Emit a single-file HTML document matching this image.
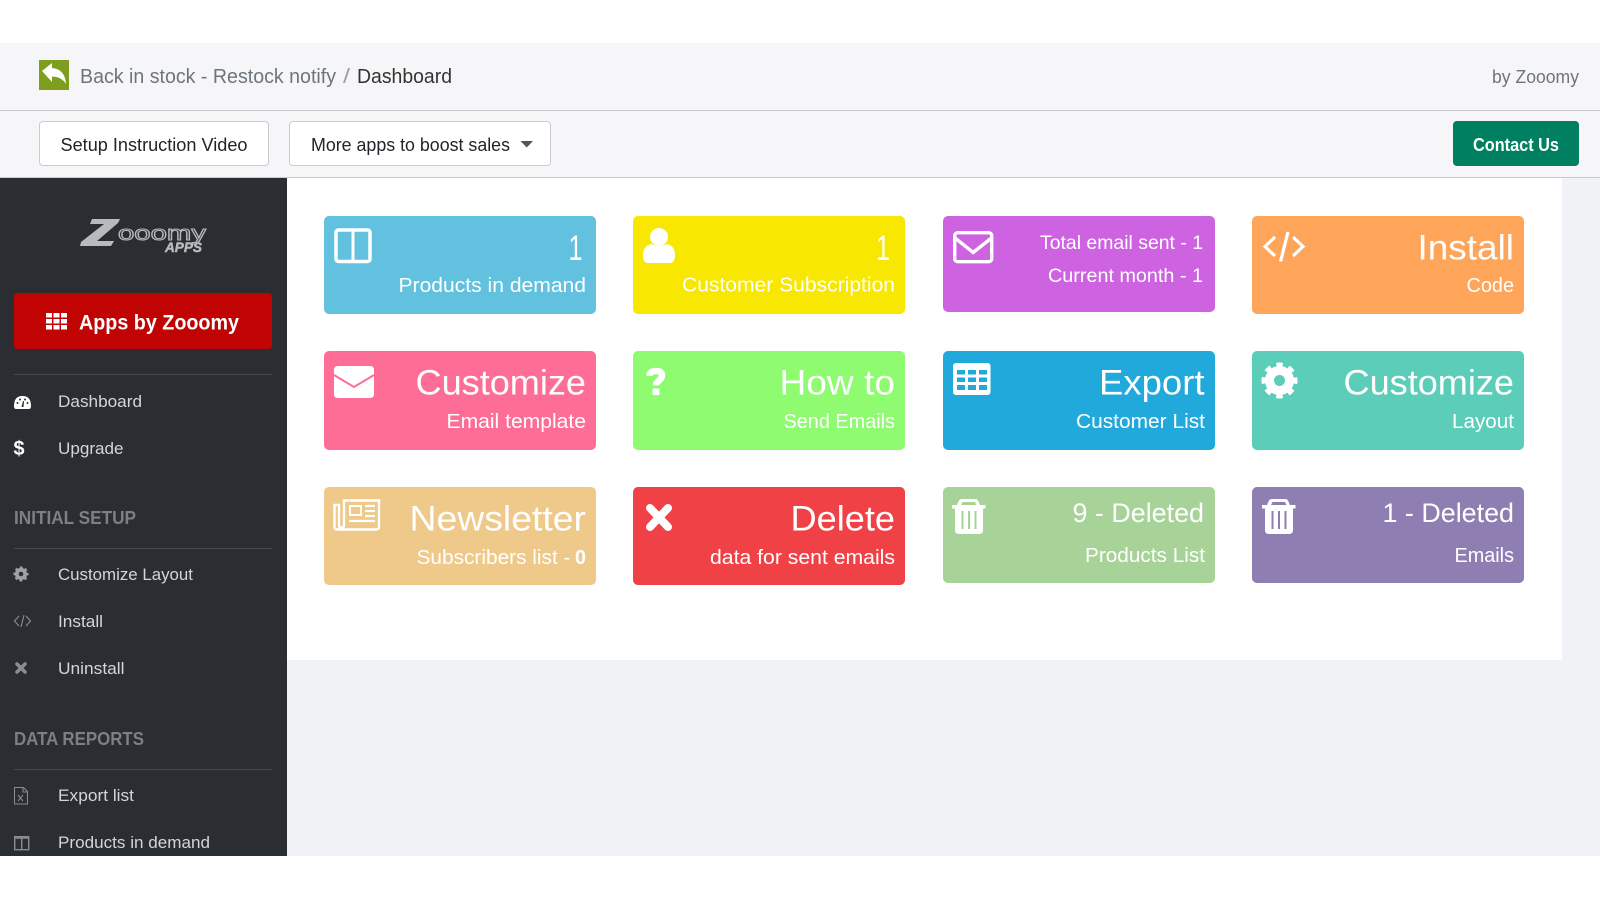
<!DOCTYPE html>
<html lang="en">
<head>
<meta charset="utf-8">
<title>Dashboard</title>
<style>
html,body{margin:0;padding:0;width:1600px;height:900px;overflow:hidden;background:#fff;font-family:"Liberation Sans",sans-serif}
.b{position:absolute;box-sizing:border-box}
.card{position:absolute;width:272px;border-radius:5px}
svg#o{position:absolute;left:0;top:0}
svg text{font-family:"Liberation Sans",sans-serif}
.w text{fill:#fff}
.nav{fill:#d3d5d8;font-size:17px}
.hd{fill:#7d7f87;font-size:18px;font-weight:700}
</style>
</head>
<body>
<div class="b" style="left:0;top:43px;width:1600px;height:135px;background:#f6f6f8"></div>
<div class="b" style="left:0;top:110px;width:1600px;height:1px;background:#c9cacc"></div>
<div class="b" style="left:0;top:177px;width:1600px;height:1px;background:#c9cacc"></div>
<div class="b" style="left:287px;top:178px;width:1313px;height:678px;background:#f1f2f6"></div>
<div class="b" style="left:287px;top:178px;width:1275px;height:482px;background:#fff"></div>
<div class="b" style="left:0;top:178px;width:287px;height:678px;background:#2a2e33"></div>
<div class="b" style="left:39px;top:121px;width:230px;height:45px;background:#fff;border:1px solid #c9cccf;border-radius:4px"></div>
<div class="b" style="left:289px;top:121px;width:262px;height:45px;background:#fff;border:1px solid #c9cccf;border-radius:4px"></div>
<div class="b" style="left:1453px;top:121px;width:126px;height:45px;background:#008060;border-radius:4px"></div>
<div class="b" style="left:14px;top:293px;width:258px;height:56px;background:#c00404;border-radius:3px"></div>
<div class="b" style="left:14px;top:374px;width:258px;height:1px;background:#45494e"></div>
<div class="b" style="left:14px;top:548px;width:258px;height:1px;background:#45494e"></div>
<div class="b" style="left:14px;top:769px;width:258px;height:1px;background:#45494e"></div>

<div class="card" style="left:324px;top:216px;height:98px;background:#62c1df"></div>
<div class="card" style="left:633px;top:216px;height:98px;background:#f8e700"></div>
<div class="card" style="left:943px;top:216px;height:96px;background:#ce63e2"></div>
<div class="card" style="left:1252px;top:216px;height:98px;background:#ffa55a"></div>
<div class="card" style="left:324px;top:351px;height:99px;background:#fd6d95"></div>
<div class="card" style="left:633px;top:351px;height:99px;background:#8efb70"></div>
<div class="card" style="left:943px;top:351px;height:99px;background:#22a9db"></div>
<div class="card" style="left:1252px;top:351px;height:99px;background:#5ccdb9"></div>
<div class="card" style="left:324px;top:487px;height:98px;background:#efc98a"></div>
<div class="card" style="left:633px;top:487px;height:98px;background:#ef4146"></div>
<div class="card" style="left:943px;top:487px;height:96px;background:#a7d398"></div>
<div class="card" style="left:1252px;top:487px;height:96px;background:#8f7eb2"></div>

<svg id="o" width="1600" height="900" viewBox="0 0 1600 900" xmlns="http://www.w3.org/2000/svg">
<defs>
<g id="cog"><circle r="10" fill="none" stroke="#fff" stroke-width="9"/><circle r="15.5" fill="none" stroke="#fff" stroke-width="5" stroke-dasharray="6.2 5.97" stroke-dashoffset="3.1"/></g>
<path id="trash" fill="#fff" fill-rule="evenodd" d="M0 6h5l2-4.500Q8 0 10 0h13q2 0 3 1.500L28 6h5.500v3.500H31V31q0 4-4 4H7q-4 0-4-4V9.500H0zM9 6h15.500l-1.500-3H10.500zM9.500 12v18h2V12zM16 12v18h2V12zM22.500 12v18h2V12z"/>
</defs>

<!-- header -->
<rect x="39" y="60" width="30" height="30" fill="#7d9e1e"/>
<path d="M42 71l10-8v5q13 1 14 16-4-7-14-7.500V82z" fill="#fff"/>
<text x="80" y="83" font-size="20" fill="#6c757d" textLength="256" lengthAdjust="spacingAndGlyphs">Back in stock - Restock notify</text>
<text x="343" y="83" font-size="20" fill="#9aa0a6" textLength="7" lengthAdjust="spacingAndGlyphs">/</text>
<text x="357" y="83" font-size="20" fill="#333" textLength="95" lengthAdjust="spacingAndGlyphs">Dashboard</text>
<text x="1492" y="83" font-size="18" fill="#6c757d" textLength="87" lengthAdjust="spacingAndGlyphs">by Zooomy</text>
<text x="60.500" y="151" font-size="18" fill="#212529" textLength="187" lengthAdjust="spacingAndGlyphs">Setup Instruction Video</text>
<text x="311" y="151" font-size="18" fill="#212529" textLength="199" lengthAdjust="spacingAndGlyphs">More apps to boost sales</text>
<path d="M520.500 141h12.500l-6.250 6.500z" fill="#555"/>
<text x="1473" y="151" font-size="18" font-weight="700" fill="#fff" textLength="86" lengthAdjust="spacingAndGlyphs">Contact Us</text>

<!-- sidebar logo -->
<path d="M92 219h28l-2 4-21 18h17l-3 5H80l1-4 23-18H90z" fill="#b9babb"/>
<text x="118" y="240" font-size="20" fill="none" stroke="#b9babb" stroke-width="1" textLength="88" lengthAdjust="spacingAndGlyphs">ooomy</text>
<text x="165" y="252" font-size="14" font-weight="700" font-style="italic" fill="#b9babb" stroke="#b9babb" stroke-width=".5" textLength="37" lengthAdjust="spacingAndGlyphs">APPS</text>

<!-- apps button -->
<g fill="#fff">
<rect x="46" y="313" width="6" height="4.500"/><rect x="53.500" y="313" width="6" height="4.500"/><rect x="61" y="313" width="6" height="4.500"/>
<rect x="46" y="319" width="6" height="4.500"/><rect x="53.500" y="319" width="6" height="4.500"/><rect x="61" y="319" width="6" height="4.500"/>
<rect x="46" y="325" width="6" height="4.500"/><rect x="53.500" y="325" width="6" height="4.500"/><rect x="61" y="325" width="6" height="4.500"/>
</g>
<text x="79" y="329.500" font-size="21" font-weight="700" fill="#fff" textLength="160" lengthAdjust="spacingAndGlyphs">Apps by Zooomy</text>

<!-- sidebar nav -->
<text class="nav" x="58" y="407" textLength="84" lengthAdjust="spacingAndGlyphs">Dashboard</text>
<text class="nav" x="58" y="454" textLength="65.500" lengthAdjust="spacingAndGlyphs">Upgrade</text>
<text class="hd" x="14" y="524" textLength="122" lengthAdjust="spacingAndGlyphs">INITIAL SETUP</text>
<text class="nav" x="58" y="580" textLength="135" lengthAdjust="spacingAndGlyphs">Customize Layout</text>
<text class="nav" x="58" y="627" textLength="45" lengthAdjust="spacingAndGlyphs">Install</text>
<text class="nav" x="58" y="674" textLength="66.500" lengthAdjust="spacingAndGlyphs">Uninstall</text>
<text class="hd" x="14" y="745" textLength="130" lengthAdjust="spacingAndGlyphs">DATA REPORTS</text>
<text class="nav" x="58" y="801" textLength="76" lengthAdjust="spacingAndGlyphs">Export list</text>
<text class="nav" x="58" y="848" textLength="152" lengthAdjust="spacingAndGlyphs">Products in demand</text>

<!-- sidebar icons -->
<path d="M14 406q0-10 8.500-10T31 406q0 3-2 3H16q-2 0-2-3z" fill="#fff"/>
<g fill="#2a2e33"><circle cx="17.500" cy="403" r="1"/><circle cx="20" cy="399.500" r="1"/><circle cx="25" cy="399.500" r="1"/><circle cx="27.500" cy="403" r="1"/><path d="M21.500 407l1.500-6 1 .3-.5 5.700z"/></g>
<text x="13.500" y="455" font-size="20" font-weight="700" fill="#fff" textLength="11" lengthAdjust="spacingAndGlyphs">$</text>
<use href="#cog" transform="translate(21 574) scale(.42)" style="opacity:.55"/>
<path d="M19 616l-4.500 5 4.500 5M26 616l4.500 5-4.500 5M24 615l-3 12" fill="none" stroke="#8b8d91" stroke-width="1.100"/>
<path d="M17 664l8 8M25 664l-8 8" stroke="#8b8d91" stroke-width="3.500" stroke-linecap="round"/>
<path d="M14.500 787.500h9l4 4v12.500h-13zM23 787.500v4.500h4.500" fill="none" stroke="#8b8d91" stroke-width="1"/>
<path d="M18 795l5 6M23 795l-5 6" stroke="#8b8d91" stroke-width="1"/>
<rect x="14.700" y="836.700" width="14" height="13" fill="none" stroke="#8b8d91" stroke-width="1.400"/><path d="M21.700 837v13M14 838h15" stroke="#8b8d91" stroke-width="1.400"/>

<!-- card text -->
<g class="w">
<text x="568.500" y="260" font-size="35" textLength="14" lengthAdjust="spacingAndGlyphs">1</text>
<text x="398.500" y="292" font-size="20.500" textLength="187.500" lengthAdjust="spacingAndGlyphs">Products in demand</text>
<text x="876" y="260" font-size="35" textLength="14" lengthAdjust="spacingAndGlyphs">1</text>
<text x="682" y="291.500" font-size="20.500" textLength="213" lengthAdjust="spacingAndGlyphs">Customer Subscription</text>
<text x="1040" y="249" font-size="19.500" textLength="163" lengthAdjust="spacingAndGlyphs">Total email sent - 1</text>
<text x="1048" y="282" font-size="19.500" textLength="155" lengthAdjust="spacingAndGlyphs">Current month - 1</text>
<text x="1417.500" y="259.500" font-size="35" textLength="96.500" lengthAdjust="spacingAndGlyphs">Install</text>
<text x="1466.500" y="292" font-size="20.500" textLength="47.500" lengthAdjust="spacingAndGlyphs">Code</text>

<text x="415.500" y="394.500" font-size="35" textLength="170.500" lengthAdjust="spacingAndGlyphs">Customize</text>
<text x="446.500" y="428" font-size="20.500" textLength="139.500" lengthAdjust="spacingAndGlyphs">Email template</text>
<text x="779.500" y="394.500" font-size="35" textLength="115.500" lengthAdjust="spacingAndGlyphs">How to</text>
<text x="783.500" y="428" font-size="20.500" textLength="111.500" lengthAdjust="spacingAndGlyphs">Send Emails</text>
<text x="1099" y="394.500" font-size="35" textLength="105.500" lengthAdjust="spacingAndGlyphs">Export</text>
<text x="1076" y="428" font-size="20.500" textLength="129" lengthAdjust="spacingAndGlyphs">Customer List</text>
<text x="1343.500" y="394.500" font-size="35" textLength="170.500" lengthAdjust="spacingAndGlyphs">Customize</text>
<text x="1452" y="428" font-size="20.500" textLength="62" lengthAdjust="spacingAndGlyphs">Layout</text>

<text x="409.500" y="530.500" font-size="35" textLength="176.500" lengthAdjust="spacingAndGlyphs">Newsletter</text>
<text x="416.500" y="564" font-size="20.500" textLength="154" lengthAdjust="spacingAndGlyphs">Subscribers list -</text>
<text x="575" y="564" font-size="20.500" font-weight="700" textLength="11" lengthAdjust="spacingAndGlyphs">0</text>
<text x="790.500" y="530.500" font-size="35" textLength="104.500" lengthAdjust="spacingAndGlyphs">Delete</text>
<text x="710" y="564" font-size="20.500" textLength="185" lengthAdjust="spacingAndGlyphs">data for sent emails</text>
<text x="1072.500" y="522" font-size="27" textLength="131.500" lengthAdjust="spacingAndGlyphs">9 - Deleted</text>
<text x="1085" y="562" font-size="20.500" textLength="120" lengthAdjust="spacingAndGlyphs">Products List</text>
<text x="1382.500" y="522" font-size="27" textLength="131.500" lengthAdjust="spacingAndGlyphs">1 - Deleted</text>
<text x="1454.500" y="562" font-size="20.500" textLength="59.500" lengthAdjust="spacingAndGlyphs">Emails</text>
</g>

<!-- card icons -->
<rect x="336" y="230" width="34" height="31.500" rx="2.500" fill="none" stroke="#fff" stroke-width="3.500"/>
<path d="M353 230v32" stroke="#fff" stroke-width="3"/>

<circle cx="659" cy="237" r="9" fill="#fff"/>
<path d="M643 255q0-9 8-11 8 4 16 0 8 2 8 11 0 8-5 8h-22q-5 0-5-8z" fill="#fff"/>

<rect x="954.700" y="232.700" width="37" height="29" rx="3" fill="none" stroke="#fff" stroke-width="3.400"/>
<path d="M955 238l18.200 14.500L991.500 238" fill="none" stroke="#fff" stroke-width="3.400"/>

<path d="M1275 237l-10 9.500 10 9.500M1293 237l10 9.500-10 9.500M1288 232l-7.500 29.500" fill="none" stroke="#fff" stroke-width="3.200"/>

<path d="M334 370q0-4 4-4h32q4 0 4 4v24q0 4-4 4h-32q-4 0-4-4z" fill="#fff"/>
<path d="M334 375l20 12 20-12" fill="none" stroke="#fd6d95" stroke-width="2"/>

<path d="M649.500 376q0-5 6.500-5 6 0 6 4.500c0 5-6 5-6 10" fill="none" stroke="#fff" stroke-width="6.500"/>
<rect x="652.500" y="388.500" width="7" height="6.500" fill="#fff"/>

<rect x="953" y="363" width="37.500" height="32" rx="3" fill="#fff"/>
<g fill="#22a9db">
<rect x="957" y="370" width="8" height="4.500"/><rect x="968" y="370" width="8" height="4.500"/><rect x="979" y="370" width="8" height="4.500"/>
<rect x="957" y="377.500" width="8" height="4.500"/><rect x="968" y="377.500" width="8" height="4.500"/><rect x="979" y="377.500" width="8" height="4.500"/>
<rect x="957" y="385" width="8" height="5"/><rect x="968" y="385" width="8" height="5"/><rect x="979" y="385" width="8" height="5"/>
</g>

<use href="#cog" x="1279.500" y="380.500"/>

<path d="M344 500.500h35v26q0 3-3 3h-39q-2.500 0-2.500-3V505h4.500v21q0 1.500 2 1.500 3 0 3-1.500z" fill="none" stroke="#fff" stroke-width="2.400"/>
<path d="M350 506h11v9h-11z" fill="none" stroke="#fff" stroke-width="2"/>
<path d="M365 506h10M365 511h10M365 516h10M349 521h26" stroke="#fff" stroke-width="2.200"/>

<path d="M650 508l18 19M668 508l-18 19" stroke="#fff" stroke-width="8" stroke-linecap="round"/>

<use href="#trash" x="952" y="499"/>
<use href="#trash" x="1262" y="499"/>
</svg>
</body>
</html>
